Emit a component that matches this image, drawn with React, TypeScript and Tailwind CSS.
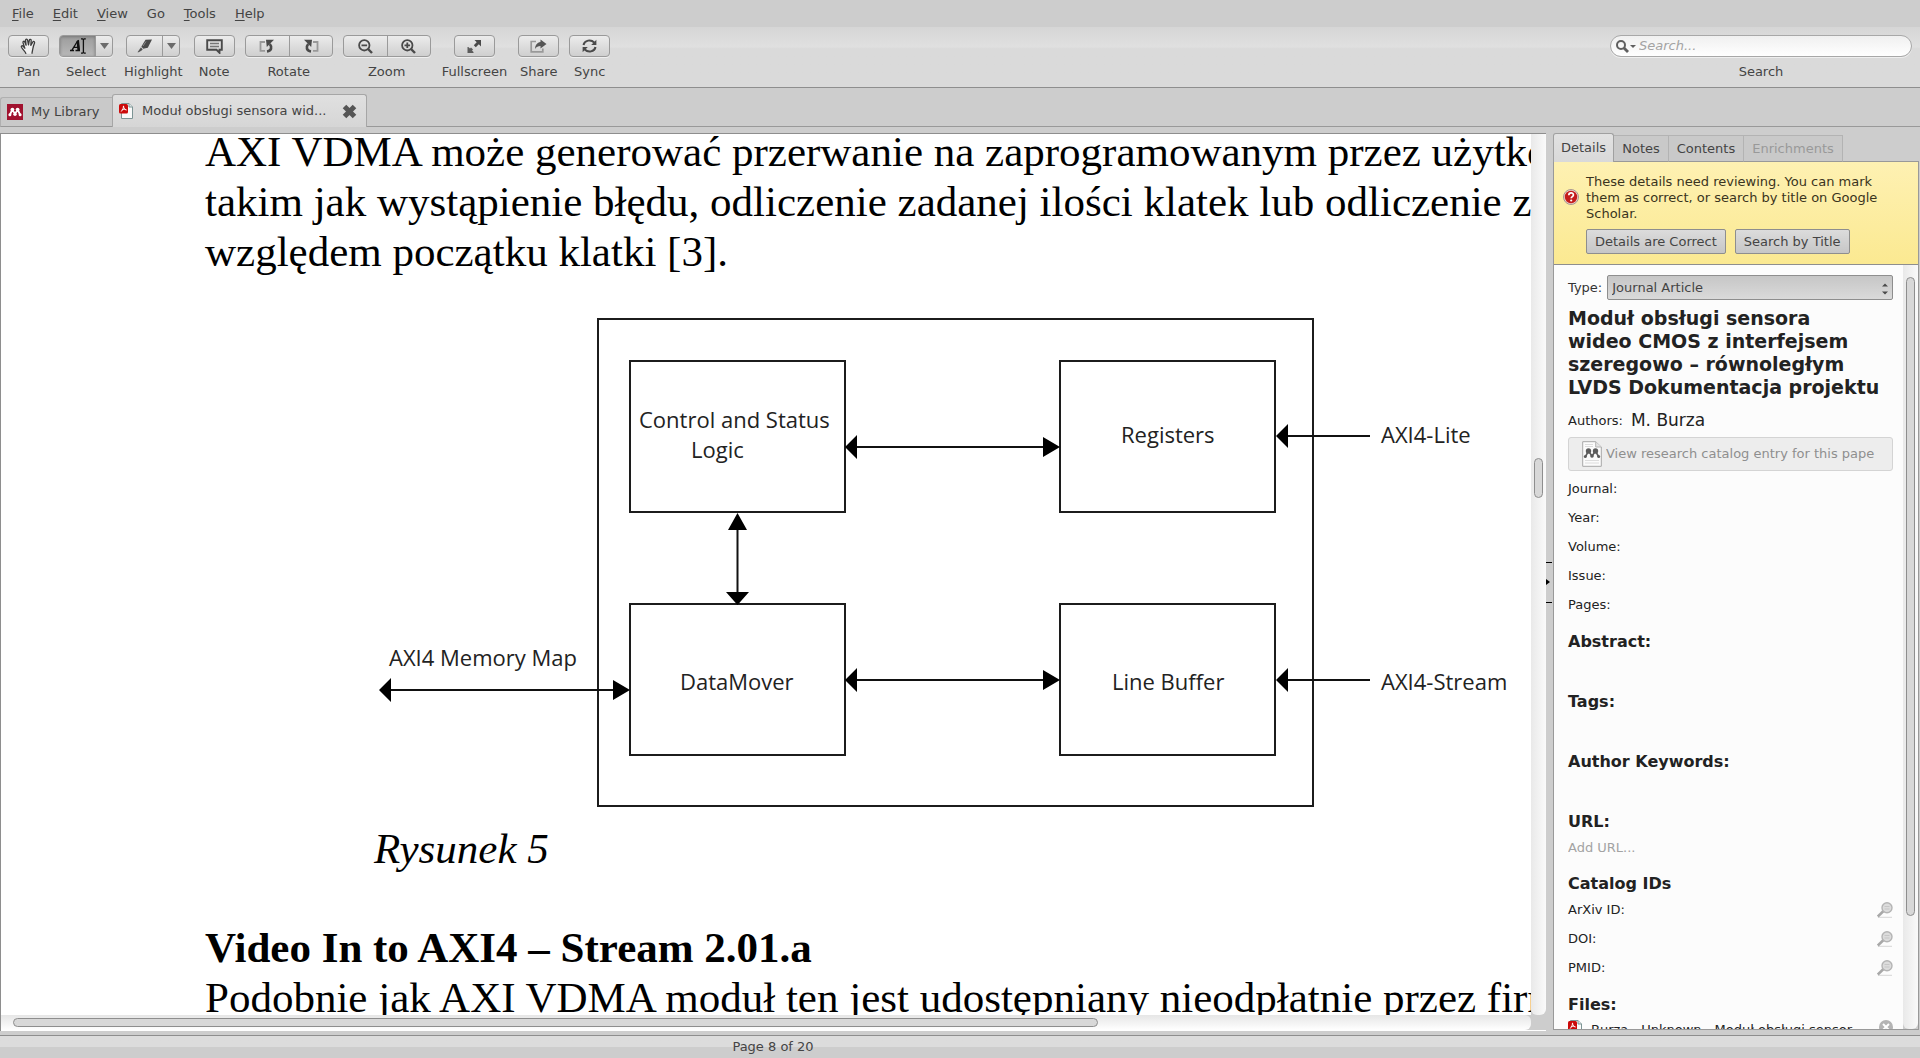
import { useState } from "react";
import type { ReactNode } from "react";

const RAISED = "border border-[#9a9a9a] bg-linear-to-b from-[#ececec] to-[#cfcfcf]";

function Tool({ label, children }: { label: string; children: ReactNode }) {
  return (
    <div className="flex flex-col items-center gap-[6px]" role="group" aria-label={label}>
      <div className={`flex h-[22px] overflow-hidden rounded-[4px] shadow-[0_1px_0_#efefef] ${RAISED}`}>{children}</div>
      <span className="px-px leading-[18px]">{label}</span>
    </div>
  );
}

function ToolButton({
  label,
  width = "w-[39px]",
  divided = false,
  pressed = false,
  children,
}: {
  label: string;
  width?: string;
  divided?: boolean;
  pressed?: boolean;
  children: ReactNode;
}) {
  return (
    <button
      type="button"
      aria-label={label}
      aria-pressed={pressed}
      className={`flex h-full items-center justify-center ${width} ${divided ? "border-l border-[#9a9a9a]" : ""} ${
        pressed ? "bg-linear-to-b from-[#9c9c9c] to-[#b8b8b8] shadow-[inset_0_1px_3px_#777]" : ""
      }`}
    >
      {children}
    </button>
  );
}

function DownTriangle() {
  return (
    <svg width="9" height="6" viewBox="0 0 9 6" aria-hidden="true">
      <path d="M0 0h9L4.500 6z" fill="#6b6b6b" />
    </svg>
  );
}

function HandIcon() {
  return (
    <svg width="18" height="17" viewBox="0 0 18 17" aria-hidden="true">
      <path
        d="M6 15.800C5.500 13.500 3 12 1.500 9.200.9 8 2.300 7.200 3.200 8.300l1.600 1.900L3 4.600c-.4-1.400 1.300-1.900 1.800-.6l1.300 3.200-.5-4.800c-.1-1.500 1.700-1.700 2-.2l.9 4.600.8-4.500c.3-1.400 2-1.100 1.900.3l-.4 4.700 2-3.300c.7-1.200 2.200-.4 1.700.9-.8 2-1.300 3.500-1.600 5.600-.2 1.700-.9 3-.9 5.300"
        fill="#efefef"
        stroke="#3c3c3c"
        strokeWidth="1.300"
        strokeLinejoin="round"
      />
    </svg>
  );
}

function TextCursorIcon() {
  return (
    <svg width="18" height="16" viewBox="0 0 18 16" aria-hidden="true">
      <path
        d="M1 12.500h4M6.500 12.500h4.500M2.800 12.300L8.600 3M9 2.500l1 10M4.800 9.300h5"
        fill="none"
        stroke="#111"
        strokeWidth="1.300"
      />
      <path d="M7.600 3L10 1.800l1 10.700H8.400z" fill="#111" />
      <path d="M12 .8h1.500l.9.900.9-.9h1.500M12 15.200h1.500l.9-.9.9.9h1.500M14.400 1.500v13" fill="none" stroke="#111" strokeWidth="1.300" />
    </svg>
  );
}

function HighlighterIcon() {
  return (
    <svg width="16" height="14" viewBox="0 0 16 14" aria-hidden="true">
      <path d="M8.500.8L15 .5l-4.200 8.200-4.600 1.100-1.800-2.300z" fill="#4a4a4a" />
      <path d="M4 8.300l1.700 2.300-1.400 1.200-2.600 1.400H.5z" fill="#555" />
      <path d="M9 2.500L6 7" stroke="#8a8a8a" strokeWidth="1" />
    </svg>
  );
}

function NoteIcon() {
  return (
    <svg width="17" height="15" viewBox="0 0 17 15" aria-hidden="true">
      <path d="M1.200 1.200h14.600v9.600H13.500v3l-3-3H1.200z" fill="none" stroke="#4a4a4a" strokeWidth="1.900" />
      <path d="M4 4.500h9M4 7.500h9" stroke="#777" strokeWidth="1.300" />
    </svg>
  );
}

function RotateIcon({ flipped = false }: { flipped?: boolean }) {
  return (
    <svg width="16" height="14" viewBox="0 0 16 14" className={flipped ? "-scale-x-100" : ""} aria-hidden="true">
      <path d="M6 3H1.500v8.800H6" fill="none" stroke="#999" strokeWidth="1.800" />
      <path d="M8 12.500c4.500-.6 5.300-4.500 2.800-7.500" fill="none" stroke="#4a4a4a" strokeWidth="2.700" />
      <path d="M7 .8h8L7.800 8z" fill="#4a4a4a" />
    </svg>
  );
}

function ZoomIcon({ plus = false }: { plus?: boolean }) {
  return (
    <svg width="15" height="15" viewBox="0 0 15 15" aria-hidden="true">
      <circle cx="6.300" cy="6.300" r="5.200" fill="none" stroke="#4a4a4a" strokeWidth="1.800" />
      <path d="M10 10l4 4" stroke="#4a4a4a" strokeWidth="2.400" />
      <path d={plus ? "M3.500 6.300h5.600M6.300 3.500v5.600" : "M3.500 6.300h5.600"} stroke="#4a4a4a" strokeWidth="1.800" />
    </svg>
  );
}

function FullscreenIcon() {
  return (
    <svg width="15" height="15" viewBox="0 0 15 15" aria-hidden="true">
      <path d="M7.500 1H14v6.500l-2.200-2.200-3 2.900-2-2 2.900-3z" fill="#4a4a4a" />
      <path d="M1.300 8l1.700 1.500 1-1 2 2-1 1 1.500 1.500v1H.5V8z" fill="#5c5c5c" />
    </svg>
  );
}

function ShareIcon() {
  return (
    <svg width="17" height="14" viewBox="0 0 17 14" aria-hidden="true">
      <path d="M6 2.500H1.200v10.300h11.600V9.500" fill="none" stroke="#999" strokeWidth="1.700" />
      <path d="M10.500.5L16.500 5l-6 4.500V7C8 7 6.500 7.800 5 10c.2-3.800 2-6.500 5.500-7z" fill="#555" />
    </svg>
  );
}

function SyncIcon() {
  return (
    <svg width="15" height="14" viewBox="0 0 15 14" aria-hidden="true">
      <path d="M1.500 6C2.500 1 9 .2 12.200 3.500" fill="none" stroke="#4a4a4a" strokeWidth="2" />
      <path d="M14.400.8v5.200H9.200z" fill="#4a4a4a" />
      <path d="M13.500 8c-1 5-7.500 5.800-10.700 2.500" fill="none" stroke="#4a4a4a" strokeWidth="2" />
      <path d="M.6 13.200V8h5.200z" fill="#4a4a4a" />
    </svg>
  );
}

function MendeleyIcon() {
  return (
    <svg width="16" height="16" viewBox="0 0 16 16" className="shrink-0" aria-hidden="true">
      <rect width="16" height="16" fill="#a1122f" />
      <circle cx="5.400" cy="5.600" r="1.900" fill="#fff" />
      <circle cx="10.600" cy="5.600" r="1.900" fill="#fff" />
      <path d="M3 10.500L5.200 6l2.800 3.500L10.800 6l2.200 4.500" fill="none" stroke="#fff" strokeWidth="1.800" />
      <circle cx="2.900" cy="10.800" r="1.500" fill="#fff" />
      <circle cx="8" cy="10.200" r="1.700" fill="#fff" />
      <circle cx="13.100" cy="10.800" r="1.500" fill="#fff" />
    </svg>
  );
}

function PdfIcon() {
  return (
    <svg width="14" height="16" viewBox="0 0 14 16" className="shrink-0" aria-hidden="true">
      <path d="M2.500.5h7.500l3.500 3.500v11.500h-11z" fill="#fafafa" stroke="#7c9494" />
      <path d="M10 .5V4h3.500" fill="#dfe6e6" stroke="#7c9494" />
      <rect x="0" y="1" width="9" height="9.500" rx="1.500" fill="#cc0a0a" />
      <path d="M4.500 2.800C4.500 6 3 8.300 1.800 8.500M4.500 3c.3 2.500 1.500 3.800 3 4M2.800 6.800c1.500-.8 3-.8 4.500 0" fill="none" stroke="#fff" strokeWidth=".9" />
    </svg>
  );
}

function CatalogIcon() {
  return (
    <svg width="20" height="26" viewBox="0 0 20 26" className="shrink-0" aria-hidden="true">
      <path d="M.7.700h13L19.300 6v19.300H.7z" fill="#fbfbfb" stroke="#a8a8a8" />
      <path d="M13.700.7V6h5.600" fill="#e4e4e4" stroke="#b5b5b5" />
      <path d="M3 3.500h8M3 5.500h8M3 19.500h14M3 22h14" stroke="#dcdcdc" />
      <circle cx="6.500" cy="10" r="2.700" fill="#5c5c5c" />
      <circle cx="13.500" cy="10" r="2.700" fill="#5c5c5c" />
      <path d="M3.500 15.500L6.500 10l3.500 5 3.500-5 3 5.500" fill="none" stroke="#5c5c5c" strokeWidth="1.600" />
      <circle cx="3.300" cy="15.500" r="1.500" fill="#5c5c5c" />
      <circle cx="10" cy="15" r="1.800" fill="#5c5c5c" />
      <circle cx="16.700" cy="15.500" r="1.500" fill="#5c5c5c" />
    </svg>
  );
}

function LookupIcon() {
  return (
    <svg width="16" height="16" viewBox="0 0 16 16" aria-hidden="true">
      <path d="M1 15.300h14" stroke="#d5d5d5" />
      <path d="M6.500 9L.8 14.500" stroke="#a8a8a8" strokeWidth="2.600" />
      <circle cx="10" cy="5.800" r="5" fill="#dcdcdc" stroke="#b4b4b4" strokeWidth="1.400" />
      <path d="M7.500 4.500h5M7.500 7h5" stroke="#c6c6c6" />
    </svg>
  );
}

function Toolbar() {
  return (
    <header className="flex h-[61px] shrink-0 items-start justify-between border-b border-[#8e8e8e] bg-linear-to-b from-[#d6d6d6] from-0% via-[#e0e0e0] via-33% to-[#dadada] to-36% px-2 pt-2">
      <div className="flex gap-[10px]">
        <Tool label="Pan">
          <ToolButton label="Pan">
            <HandIcon />
          </ToolButton>
        </Tool>
        <Tool label="Select">
          <ToolButton label="Select text" width="w-[35px]" pressed>
            <TextCursorIcon />
          </ToolButton>
          <ToolButton label="Select options" width="w-[17px]" divided>
            <DownTriangle />
          </ToolButton>
        </Tool>
        <Tool label="Highlight">
          <ToolButton label="Highlight text" width="w-[35px]">
            <HighlighterIcon />
          </ToolButton>
          <ToolButton label="Highlight options" width="w-[17px]" divided>
            <DownTriangle />
          </ToolButton>
        </Tool>
        <Tool label="Note">
          <ToolButton label="Note">
            <NoteIcon />
          </ToolButton>
        </Tool>
        <Tool label="Rotate">
          <ToolButton label="Rotate left" width="w-[43px]">
            <RotateIcon />
          </ToolButton>
          <ToolButton label="Rotate right" width="w-[43px]" divided>
            <RotateIcon flipped />
          </ToolButton>
        </Tool>
        <Tool label="Zoom">
          <ToolButton label="Zoom out" width="w-[43px]">
            <ZoomIcon />
          </ToolButton>
          <ToolButton label="Zoom in" width="w-[43px]" divided>
            <ZoomIcon plus />
          </ToolButton>
        </Tool>
        <Tool label="Fullscreen">
          <ToolButton label="Fullscreen">
            <FullscreenIcon />
          </ToolButton>
        </Tool>
        <Tool label="Share">
          <ToolButton label="Share">
            <ShareIcon />
          </ToolButton>
        </Tool>
        <Tool label="Sync">
          <ToolButton label="Sync">
            <SyncIcon />
          </ToolButton>
        </Tool>
      </div>
      <div className="flex w-[302px] flex-col items-center gap-[6px]">
        <div className="flex h-[22px] w-full items-center rounded-full border border-[#a8a8a8] bg-linear-to-b from-[#f0f0f0] to-white pl-[5px] shadow-[0_1px_0_#efefef]">
          <svg width="20" height="13" viewBox="0 0 20 13" aria-hidden="true">
            <circle cx="5" cy="5" r="4" fill="none" stroke="#5f5f5f" strokeWidth="2" />
            <path d="M8 8l4 4" stroke="#5f5f5f" strokeWidth="2.800" />
            <path d="M14 5h6l-3 3z" fill="#5f5f5f" />
          </svg>
          <input
            id="search"
            type="search"
            placeholder="Search..."
            className="min-w-0 flex-1 bg-transparent pr-3 pl-[3px] outline-none placeholder:text-[#a3a3a3] placeholder:italic"
          />
        </div>
        <label htmlFor="search" className="leading-[18px]">
          Search
        </label>
      </div>
    </header>
  );
}

function MenuBar() {
  const items = [
    ["F", "ile"],
    ["E", "dit"],
    ["V", "iew"],
    ["", "Go"],
    ["T", "ools"],
    ["H", "elp"],
  ];
  return (
    <nav className="flex h-[27px] shrink-0 items-center gap-px pl-[3px]" aria-label="Menu">
      {items.map(([key, rest]) => (
        <button key={rest} type="button" className="px-[9px]">
          {key && <span className="underline underline-offset-2">{key}</span>}
          {rest}
        </button>
      ))}
    </nav>
  );
}

function DocumentTabs() {
  return (
    <div className="flex h-[39px] shrink-0 items-end" role="tablist" aria-label="Open documents">
      <button
        type="button"
        role="tab"
        aria-selected="false"
        className="flex h-[30px] w-[112px] items-center gap-2 rounded-tl-[3px] border-t border-b border-l border-[#b0b0b0] border-b-[#999] bg-[#c9c9c9] pl-[6px]"
      >
        <MendeleyIcon />
        My Library
      </button>
      <div className="flex h-[33px] w-[255px] items-center rounded-t-[3px] border border-b-0 border-[#a6a6a6] bg-linear-to-b from-[#e0e0e0] to-[#d6d6d6] pr-[9px] pl-[6px]">
        <button type="button" role="tab" aria-selected="true" className="flex flex-1 items-center gap-[9px] whitespace-nowrap">
          <PdfIcon />
          Moduł obsługi sensora wid...
        </button>
        <button type="button" aria-label="Close tab">
          <svg width="15" height="15" viewBox="0 0 15 15" aria-hidden="true">
            <path d="M2.500 2.500l10 10M12.500 2.500l-10 10" stroke="#555" strokeWidth="5" />
          </svg>
        </button>
      </div>
      <div className="flex-1 self-stretch border-b border-[#999]" />
    </div>
  );
}

function Block({ x, y, w, h }: { x: number; y: number; w: number; h: number }) {
  return <rect x={x} y={y} width={w} height={h} fill="none" stroke="#1c1c1c" strokeWidth="2" />;
}

function DoubleArrow({ from, to, y }: { from: number; to: number; y: number }) {
  return (
    <g>
      <path d={`M${from + 8} ${y}H${to - 12}`} stroke="#111" strokeWidth="2" />
      <path d={`M${from} ${y}l12-12v24z M${to} ${y}l-17-10v20z`} fill="#000" />
    </g>
  );
}

function InArrow({ y }: { y: number }) {
  return (
    <g>
      <path d={`M910 ${y}H996`} stroke="#111" strokeWidth="2" />
      <path d={`M902 ${y}l12-12v24z`} fill="#000" />
    </g>
  );
}

function VdmaDiagram() {
  return (
    <svg
      width="1150"
      height="547"
      viewBox="0 2 1150 547"
      className="ml-[169px] block max-w-none text-[22px]"
      fontFamily="'Open Sans', 'Noto Sans', sans-serif"
      fill="#222"
      role="img"
      aria-label="AXI VDMA block diagram"
    >
      <Block x={224} y={44} w={715} h={487} />
      <Block x={256} y={86} w={215} h={151} />
      <Block x={686} y={86} w={215} h={151} />
      <Block x={256} y={329} w={215} h={151} />
      <Block x={686} y={329} w={215} h={151} />
      <DoubleArrow from={471} to={686} y={172} />
      <DoubleArrow from={471} to={686} y={405} />
      <DoubleArrow from={5} to={256} y={415} />
      <path d="M363.500 250v72" stroke="#111" strokeWidth="2" />
      <path d="M363.500 238l-9.500 17h19z M363.500 330l-11.500-13h23z" fill="#000" />
      <InArrow y={161} />
      <InArrow y={405} />
      <text x="265" y="153">Control and Status</text>
      <text x="317" y="183">Logic</text>
      <text x="747" y="168">Registers</text>
      <text x="306" y="415">DataMover</text>
      <text x="738" y="415">Line Buffer</text>
      <text x="15" y="391">AXI4 Memory Map</text>
      <text x="1007" y="168">AXI4-Lite</text>
      <text x="1007" y="415">AXI4-Stream</text>
    </svg>
  );
}

function DocumentView() {
  return (
    <main className="flex min-w-0 flex-1 flex-col border-t border-l border-[#8e8e8e]">
      <div className="flex min-h-0 flex-1">
        <article className="min-w-0 flex-1 overflow-hidden bg-white font-['Liberation_Serif',serif] text-[43px] leading-[50px] whitespace-nowrap text-black">
          <div className="-mt-[7px] pl-[204px]">
            <p>
              AXI VDMA może generować przerwanie na zaprogramowanym przez użytkownika
              <br />
              takim jak wystąpienie błędu, odliczenie zadanej ilości klatek lub odliczenie zadanej
              <br />
              względem początku klatki [3].
            </p>
            <figure>
              <VdmaDiagram />
              <figcaption className="ml-[169px] italic">Rysunek 5</figcaption>
            </figure>
            <h2 className="mt-[49px] font-bold">Video In to AXI4 – Stream 2.01.a</h2>
            <p>Podobnie jak AXI VDMA moduł ten jest udostępniany nieodpłatnie przez firmę Xilinx</p>
          </div>
        </article>
        <div className="flex w-[15px] shrink-0 flex-col items-center rounded-b-[6px] bg-linear-to-r from-[#e9e9e9] to-[#fafafa]">
          <div className="h-[36.8%]" />
          <div className="h-10 w-[9px] rounded-full border border-[#8e8e8e] bg-[#d8d8d8]" />
        </div>
      </div>
      <div className="flex h-4 shrink-0 border-b border-white">
        <div className="flex flex-1 items-center rounded-r-[6px] bg-linear-to-b from-[#e6e6e6] to-white pl-3">
          <div className="h-[9px] w-[71.500%] rounded-full border border-[#8e8e8e] bg-[#d8d8d8]" />
        </div>
        <div className="w-[15px]" />
      </div>
    </main>
  );
}

const SIDE_TABS = [
  { name: "Notes", width: "w-[55px]", enabled: true },
  { name: "Contents", width: "w-[75px]", enabled: true },
  { name: "Enrichments", width: "w-[99px]", enabled: false },
];

function Field({ label, lookup = false }: { label: string; lookup?: boolean }) {
  return (
    <div className="flex h-[29px] items-center gap-2">
      <label htmlFor={label}>{label}</label>
      <input id={label} type="text" className="min-w-0 flex-1 bg-transparent outline-none" />
      {lookup && (
        <button type="button" aria-label={`Look up ${label}`}>
          <LookupIcon />
        </button>
      )}
    </div>
  );
}

function SectionTitle({ children }: { children: ReactNode }) {
  return <h3 className="pt-3 text-base leading-[22px] font-bold">{children}</h3>;
}

function DetailsForm() {
  const [type, setType] = useState("Journal Article");
  return (
    <div className="min-w-0 flex-1 overflow-hidden bg-[#fcfcfc] pt-[10px] pr-[10px] pl-[14px] text-[#222]">
      <div className="flex items-center gap-[5px]">
        <label htmlFor="type" className="text-[#333]">
          Type:
        </label>
        <div className="relative flex-1">
          <select
            id="type"
            value={type}
            onChange={(e) => setType(e.target.value)}
            className="block h-[25px] w-full appearance-none rounded-[2px] border border-[#8e8e8e] bg-linear-to-b from-[#c6c6c6] to-[#dadada] px-1 text-[#444]"
          >
            <option>Journal Article</option>
            <option>Book</option>
          </select>
          <svg width="6" height="12" viewBox="0 0 6 12" className="pointer-events-none absolute top-2 right-[5px]" aria-hidden="true">
            <path d="M0 3.500L3 .5l3 3zM0 8.500l3 3 3-3z" fill="#4a4a4a" />
          </svg>
        </div>
      </div>
      <h2 className="mt-[7px] text-[19px] leading-[23px] font-bold whitespace-nowrap">
        Moduł obsługi sensora
        <br />
        wideo CMOS z interfejsem
        <br />
        szeregowo – równoległym
        <br />
        LVDS Dokumentacja projektu
      </h2>
      <div className="mt-2 flex h-7 items-center gap-[8px]">
        <label htmlFor="authors">Authors:</label>
        <input id="authors" type="text" defaultValue="M. Burza" className="min-w-0 flex-1 bg-transparent text-[17px] outline-none" />
      </div>
      <button
        type="button"
        disabled
        className="mt-0.5 flex h-[34px] w-full items-center gap-1 rounded-[3px] border border-[#d4d4d4] bg-[#ededed] pr-3 pl-[13px] text-[#8f8f8f]"
      >
        <CatalogIcon />
        <span className="flex-1 overflow-hidden text-left whitespace-nowrap">View research catalog entry for this pape</span>
      </button>
      <div className="mt-[3px]">
        <Field label="Journal:" />
        <Field label="Year:" />
        <Field label="Volume:" />
        <Field label="Issue:" />
        <Field label="Pages:" />
      </div>
      <section className="h-[60px]">
        <SectionTitle>Abstract:</SectionTitle>
      </section>
      <section className="h-[60px]">
        <SectionTitle>Tags:</SectionTitle>
      </section>
      <section className="h-[60px]">
        <SectionTitle>Author Keywords:</SectionTitle>
      </section>
      <SectionTitle>URL:</SectionTitle>
      <input
        type="text"
        aria-label="URL"
        placeholder="Add URL..."
        className="block h-7 w-full bg-transparent outline-none placeholder:text-[#a3a3a3]"
      />
      <SectionTitle>Catalog IDs</SectionTitle>
      <Field label="ArXiv ID:" lookup />
      <Field label="DOI:" lookup />
      <Field label="PMID:" lookup />
      <SectionTitle>Files:</SectionTitle>
      <div className="mt-1 flex items-start gap-[9px]">
        <PdfIcon />
        <a href="#file" className="flex-1 overflow-hidden leading-5 whitespace-nowrap">
          Burza - Unknown - Moduł obsługi sensor
        </a>
        <button type="button" aria-label="Remove file">
          <svg width="14" height="14" viewBox="0 0 14 14" aria-hidden="true">
            <circle cx="7" cy="7" r="7" fill="#b4b4b4" />
            <path d="M4 4l6 6M10 4l-6 6" stroke="#fff" strokeWidth="2" />
          </svg>
        </button>
      </div>
    </div>
  );
}

function Sidebar() {
  return (
    <aside className="flex w-[366px] shrink-0 flex-col pb-px">
      <div className="flex h-[29px] shrink-0 items-end" role="tablist" aria-label="Document panels">
        <button
          type="button"
          role="tab"
          aria-selected="true"
          className="h-full w-[61px] rounded-t-[3px] border border-b-0 border-[#a0a0a0] bg-linear-to-b from-[#e2e2e2] to-[#d9d9d9]"
        >
          Details
        </button>
        {SIDE_TABS.map((tab) => (
          <button
            key={tab.name}
            type="button"
            role="tab"
            aria-selected="false"
            disabled={!tab.enabled}
            className={`h-[27px] border-t border-r border-b border-[#b3b3b3] border-b-[#999] bg-[#c9c9c9] ${tab.width} ${
              tab.enabled ? "" : "text-[#999]"
            }`}
          >
            {tab.name}
          </button>
        ))}
        <div className="h-full flex-1 border-b border-[#999]" />
      </div>
      <div className="flex min-h-0 flex-1 flex-col border border-t-0 border-[#999]">
        <div className="flex items-start gap-[7px] border-b border-[#8e8e8e] bg-linear-to-b from-[#fef1b2] to-[#fbe991] pt-3 pb-[10px] pl-[9px] text-[#3a3420]">
          <svg width="16" height="16" viewBox="0 0 16 16" className="mt-[15px] shrink-0" aria-hidden="true">
            <circle cx="8" cy="8" r="7.500" fill="#f0d0c8" stroke="#a89890" />
            <circle cx="8" cy="8" r="6.200" fill="#c41c1c" />
            <path d="M5.800 6.300c0-3.200 4.600-3 4.600-.3 0 1.600-2.200 1.600-2.200 3.300" fill="none" stroke="#fff" strokeWidth="1.700" />
            <circle cx="8.200" cy="11.500" r="1.100" fill="#fff" />
          </svg>
          <div>
            <p className="leading-4">
              These details need reviewing. You can mark
              <br />
              them as correct, or search by title on Google
              <br />
              Scholar.
            </p>
            <div className="mt-[7px] flex gap-[9px] text-[#444]">
              <button type="button" className="h-[25px] rounded-[2px] border border-[#8e8e8e] bg-linear-to-b from-[#dcdcdc] to-[#c6c6c6] px-2">
                Details are Correct
              </button>
              <button type="button" className="h-[25px] rounded-[2px] border border-[#8e8e8e] bg-linear-to-b from-[#dcdcdc] to-[#c6c6c6] px-2">
                Search by Title
              </button>
            </div>
          </div>
        </div>
        <div className="flex min-h-0 flex-1">
          <DetailsForm />
          <div className="flex w-[15px] shrink-0 flex-col items-center rounded-b-[6px] bg-linear-to-r from-[#e9e9e9] to-[#fafafa] pt-3">
            <div className="h-[85%] w-[9px] rounded-full border border-[#8e8e8e] bg-[#d8d8d8]" />
          </div>
        </div>
      </div>
    </aside>
  );
}

export default function App() {
  return (
    <div className="flex h-screen flex-col overflow-hidden bg-[#cdcdcd] font-['DejaVu_Sans',sans-serif] text-[13px] text-[#444]">
      <MenuBar />
      <Toolbar />
      <DocumentTabs />
      <div className="flex min-h-0 flex-1 pt-[6px] pr-px pb-1">
        <DocumentView />
        <button type="button" aria-label="Hide details panel" className="flex w-[7px] shrink-0 flex-col items-start justify-center pr-px">
          <span className="flex h-[41px] w-full items-center border-y border-black">
            <svg width="4" height="6" viewBox="0 0 4 6" aria-hidden="true">
              <path d="M0 0l4 3-4 3z" fill="#000" />
            </svg>
          </span>
        </button>
        <Sidebar />
      </div>
      <footer className="flex h-[23px] shrink-0 items-center border-t border-[#8e8e8e] bg-linear-to-b from-[#dcdcdc] from-50% to-[#cdcdcd] to-50% pr-[374px]">
        <span className="flex-1 text-center">Page 8 of 20</span>
      </footer>
    </div>
  );
}
